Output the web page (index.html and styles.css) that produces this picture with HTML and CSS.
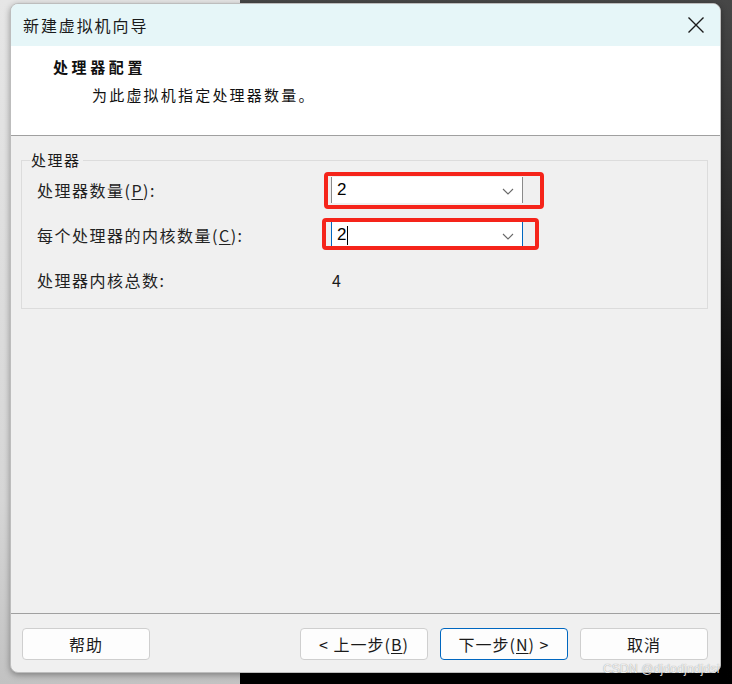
FILE: index.html
```html
<!DOCTYPE html>
<html lang="zh-CN">
<head>
<meta charset="utf-8">
<title>新建虚拟机向导</title>
<link rel="stylesheet" href="styles.css">
</head>
<body>
<div class="window">
  <div class="titlebar">
    <span class="title">新建虚拟机向导</span>
    <svg class="close" width="18" height="18" viewBox="0 0 18 18"><path d="M1.5 1.5 L16.5 16.5 M16.5 1.5 L1.5 16.5" stroke="#1b1b1b" stroke-width="1.4" fill="none"/></svg>
  </div>
  <div class="header">
    <div class="h-title">处理器配置</div>
    <div class="h-sub">为此虚拟机指定处理器数量。</div>
  </div>
  <div class="body">
    <fieldset class="group">
      <legend>处理器</legend>
      <div class="grid">
        <div class="label">处理器数量(<u>P</u>):</div>
        <div class="cell">
          <div class="combo"><span class="val">2</span>
            <svg class="chev" width="12" height="7" viewBox="0 0 12 7"><path d="M1 1 L6 6 L11 1" stroke="#6a6a6a" stroke-width="1.1" fill="none"/></svg>
          </div>
          <div class="mark mark1"></div>
        </div>
        <div class="label">每个处理器的内核数量(<u>C</u>):</div>
        <div class="cell">
          <div class="combo focus"><span class="val">2</span><span class="caret"></span>
            <svg class="chev" width="12" height="7" viewBox="0 0 12 7"><path d="M1 1 L6 6 L11 1" stroke="#6a6a6a" stroke-width="1.1" fill="none"/></svg>
          </div>
          <div class="mark mark2"></div>
        </div>
        <div class="label">处理器内核总数:</div>
        <div class="cell total">4</div>
      </div>
    </fieldset>
  </div>
  <div class="footer">
    <button class="btn">帮助</button>
    <div class="spacer"></div>
    <button class="btn">&lt; 上一步(<u>B</u>)</button>
    <button class="btn primary">下一步(<u>N</u>) &gt;</button>
    <button class="btn">取消</button>
  </div>
</div>
<div class="watermark">CSDN @djdodjndjdsi</div>
</body>
</html>
```
FILE: styles.css
```css
* { box-sizing: border-box; }
html, body { margin: 0; padding: 0; }
body {
  width: 732px;
  height: 684px;
  overflow: hidden;
  position: relative;
  font-family: "Noto Sans CJK SC", "Liberation Sans", sans-serif;
  background:
    linear-gradient(to bottom, #e6e6e6 0, #d6d6d6 500px, #c2c2c2 684px) 0 0 / 240px 684px no-repeat,
    linear-gradient(to bottom, #474747 0, #2a2a2a 200px, #050505 420px, #000 684px);
  padding: 3px 11px 11px 10px;
}
.window {
  width: 711px;
  height: 670px;
  background: #f0f0f0;
  border-radius: 8px;
  overflow: hidden;
  display: flex;
  flex-direction: column;
  box-shadow: 0 2px 6px rgba(0,0,0,0.35);
  border: 1px solid #bdbdbd;
}
.titlebar {
  height: 42px;
  flex: none;
  background: #e6f6f8;
  display: flex;
  align-items: center;
  justify-content: space-between;
  padding: 0 15px 0 12px;
}
.title {
  font-size: 16px;
  letter-spacing: 1.9px;
  color: #1a1a1a;
}
.close { display: block; }
.header {
  height: 90px;
  flex: none;
  background: #fff;
  border-bottom: 1px solid #a0a0a0;
  padding: 9px 0 0 42px;
  color: #111;
}
.h-title {
  font-size: 15px;
  font-weight: bold;
  letter-spacing: 3.6px;
  line-height: 24px;
}
.h-sub {
  font-size: 15px;
  letter-spacing: 2.2px;
  line-height: 24px;
  margin-top: 4px;
  padding-left: 39px;
}
.body {
  flex: 1;
  padding: 15px 12px 0 10px;
}
.group {
  margin: 0;
  border: 1px solid #dcdcdc;
  padding: 8px 0 15px 15px;
  min-width: 0;
}
.group legend {
  font-size: 15px;
  letter-spacing: 1.5px;
  color: #1a1a1a;
  padding: 0 2px 0 1px;
  margin-left: -7px;
  line-height: 18px;
}
.grid {
  display: grid;
  grid-template-columns: 294px 192px;
  grid-auto-rows: 26px;
  row-gap: 19px;
  align-items: center;
}
.label {
  font-size: 16px;
  letter-spacing: 1.5px;
  color: #222;
  line-height: 26px;
}
.label u { text-underline-offset: 2px; }
.cell { position: relative; height: 26px; }
.total {
  font-size: 16px;
  line-height: 26px;
  color: #1a1a1a;
  padding-left: 1px;
}
.combo {
  height: 26px;
  background: #fff;
  border-left: 1px solid #8a8a8a;
  border-right: 1px solid #8a8a8a;
  display: flex;
  align-items: center;
  padding-left: 5px;
  font-family: "Liberation Sans", sans-serif;
  font-size: 17px;
  color: #000;
  position: relative;
}
.combo.focus {
  border-left-color: #0067c0;
  border-right-color: #0067c0;
}
.caret {
  display: inline-block;
  width: 1px;
  height: 19px;
  background: #000;
  margin-left: 1px;
}
.chev { position: absolute; right: 8px; top: 11px; }
.mark {
  position: absolute;
  border: 4px solid #f5241a;
  border-radius: 4px;
}
.mark1 { left: -7px; top: -5px; width: 220px; height: 37px; }
.mark2 { left: -9px; top: -4px; width: 217px; height: 32px; }
.footer {
  flex: none;
  height: 59px;
  border-top: 1px solid #a0a0a0;
  display: flex;
  align-items: flex-start;
  gap: 12px;
  padding: 14px 12px 0 11px;
}
.spacer { flex: 1; }
.btn {
  width: 128px;
  height: 32px;
  background: #fdfdfd;
  border: 1px solid #cfcfcf;
  border-radius: 4px;
  font-family: "Noto Sans CJK SC", "Liberation Sans", sans-serif;
  font-size: 16px;
  letter-spacing: 1px;
  color: #1a1a1a;
  padding: 0;
}
.btn u { text-underline-offset: 2px; }
.btn.primary { border-color: #0067c0; }
.watermark {
  position: absolute;
  left: 603px;
  top: 662px;
  font-family: "Liberation Sans", sans-serif;
  font-size: 12px;
  color: rgba(250,250,250,0.9);
  text-shadow: 0 0 1px rgba(0,0,0,0.45);
  letter-spacing: 0.2px;
}
```
